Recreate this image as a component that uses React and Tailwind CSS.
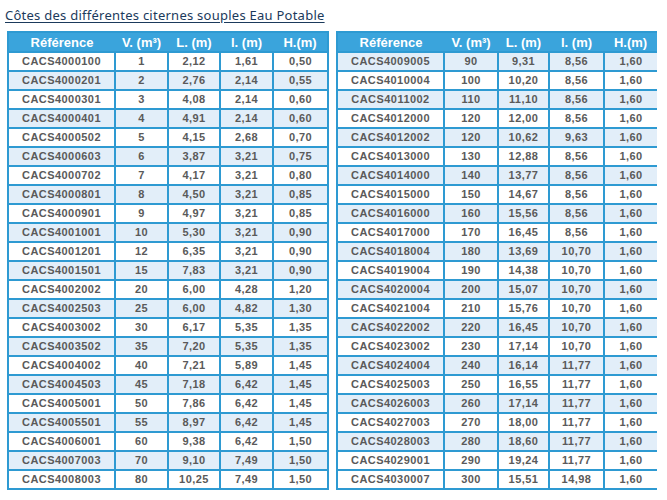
import React from "react";

const left = [
  ["CACS4000100", "1", "2,12", "1,61", "0,50"],
  ["CACS4000201", "2", "2,76", "2,14", "0,55"],
  ["CACS4000301", "3", "4,08", "2,14", "0,60"],
  ["CACS4000401", "4", "4,91", "2,14", "0,60"],
  ["CACS4000502", "5", "4,15", "2,68", "0,70"],
  ["CACS4000603", "6", "3,87", "3,21", "0,75"],
  ["CACS4000702", "7", "4,17", "3,21", "0,80"],
  ["CACS4000801", "8", "4,50", "3,21", "0,85"],
  ["CACS4000901", "9", "4,97", "3,21", "0,85"],
  ["CACS4001001", "10", "5,30", "3,21", "0,90"],
  ["CACS4001201", "12", "6,35", "3,21", "0,90"],
  ["CACS4001501", "15", "7,83", "3,21", "0,90"],
  ["CACS4002002", "20", "6,00", "4,28", "1,20"],
  ["CACS4002503", "25", "6,00", "4,82", "1,30"],
  ["CACS4003002", "30", "6,17", "5,35", "1,35"],
  ["CACS4003502", "35", "7,20", "5,35", "1,35"],
  ["CACS4004002", "40", "7,21", "5,89", "1,45"],
  ["CACS4004503", "45", "7,18", "6,42", "1,45"],
  ["CACS4005001", "50", "7,86", "6,42", "1,45"],
  ["CACS4005501", "55", "8,97", "6,42", "1,45"],
  ["CACS4006001", "60", "9,38", "6,42", "1,50"],
  ["CACS4007003", "70", "9,10", "7,49", "1,50"],
  ["CACS4008003", "80", "10,25", "7,49", "1,50"],
];

const right = [
  ["CACS4009005", "90", "9,31", "8,56", "1,60"],
  ["CACS4010004", "100", "10,20", "8,56", "1,60"],
  ["CACS4011002", "110", "11,10", "8,56", "1,60"],
  ["CACS4012000", "120", "12,00", "8,56", "1,60"],
  ["CACS4012002", "120", "10,62", "9,63", "1,60"],
  ["CACS4013000", "130", "12,88", "8,56", "1,60"],
  ["CACS4014000", "140", "13,77", "8,56", "1,60"],
  ["CACS4015000", "150", "14,67", "8,56", "1,60"],
  ["CACS4016000", "160", "15,56", "8,56", "1,60"],
  ["CACS4017000", "170", "16,45", "8,56", "1,60"],
  ["CACS4018004", "180", "13,69", "10,70", "1,60"],
  ["CACS4019004", "190", "14,38", "10,70", "1,60"],
  ["CACS4020004", "200", "15,07", "10,70", "1,60"],
  ["CACS4021004", "210", "15,76", "10,70", "1,60"],
  ["CACS4022002", "220", "16,45", "10,70", "1,60"],
  ["CACS4023002", "230", "17,14", "10,70", "1,60"],
  ["CACS4024004", "240", "16,14", "11,77", "1,60"],
  ["CACS4025003", "250", "16,55", "11,77", "1,60"],
  ["CACS4026003", "260", "17,14", "11,77", "1,60"],
  ["CACS4027003", "270", "18,00", "11,77", "1,60"],
  ["CACS4028003", "280", "18,60", "11,77", "1,60"],
  ["CACS4029001", "290", "19,24", "11,77", "1,60"],
  ["CACS4030007", "300", "15,51", "14,98", "1,60"],
];

function Table({ rows, widths, blueRow, noRight }) {
  return (
    <table className="table-fixed border-collapse">
      <colgroup>
        {widths.map((w, i) => (
          <col key={i} style={{ width: w }} />
        ))}
      </colgroup>
      <thead>
        <tr className="h-[20px] bg-[#3aa4dc]">
          {["Référence", "V. (m³)", "L. (m)", "l. (m)", "H.(m)"].map((h, i) => (
            <th
              key={i}
              className={`p-0 text-center text-[13px] font-bold leading-none text-white border-t-2 border-[#2e9ad2] ${i === 0 ? "border-l-2" : ""} ${i === 4 && !noRight ? "border-r-2" : ""}`}
            >
              {h}
            </th>
          ))}
        </tr>
      </thead>
      <tbody>
        {rows.map((r, ri) => (
          <tr key={ri} className={`h-[19px] ${blueRow(ri) ? "bg-[#e2eef9]" : "bg-white"}`}>
            {r.map((c, ci) => (
              <td
                key={ci}
                className={`p-0 text-center text-[11px] font-bold leading-none tracking-[0.45px] text-[#5a5a5a] border-2 border-[#2e9ad2] ${ci === 4 && noRight ? "border-r-0" : ""}`}
              >
                {c}
              </td>
            ))}
          </tr>
        ))}
      </tbody>
    </table>
  );
}

export default function App() {
  return (
    <div
      className="w-[667px] h-[500px] bg-white overflow-hidden"
      style={{ fontFamily: '"Liberation Sans", Arial, sans-serif' }}
    >
      <div
        className="pl-[5px] pt-[7px] h-[31px] text-[13px] leading-[16px] tracking-[0.25px] text-[#1b3a5c] underline underline-offset-2"
        style={{ fontFamily: '"Noto Sans", sans-serif' }}
      >
        Côtes des différentes citernes souples Eau Potable
      </div>
      <div className="flex pl-[7px] gap-[7px]">
        <Table rows={left} widths={[107, 53, 52, 53, 55]} blueRow={(i) => i % 2 === 1} />
        <Table
          rows={right}
          widths={[107, 54, 51, 55, 53]}
          blueRow={(i) => i % 2 === 0 && i !== 22}
          noRight
        />
      </div>
    </div>
  );
}
